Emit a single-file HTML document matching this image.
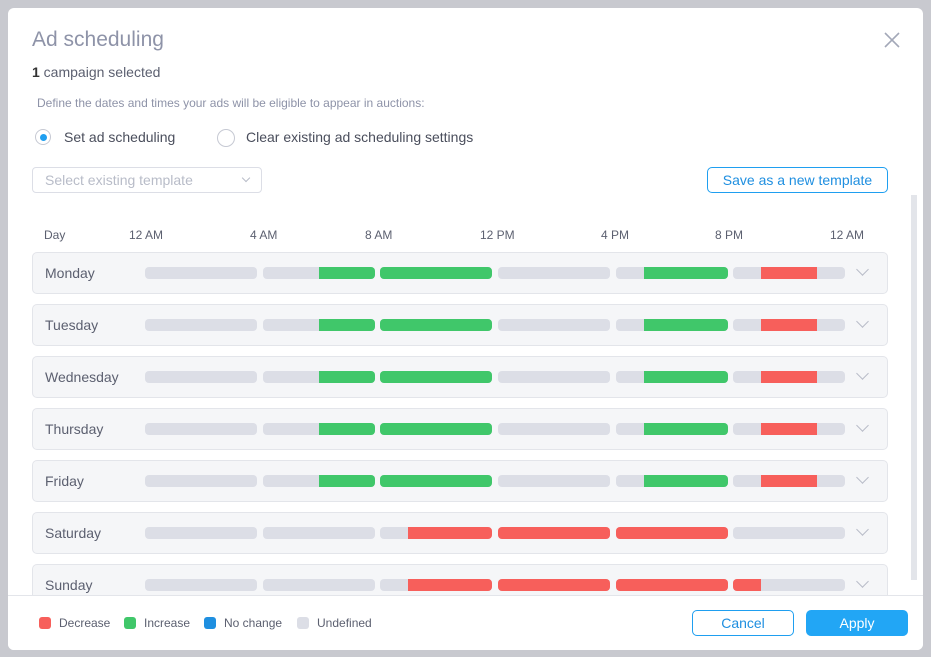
<!DOCTYPE html><html><head><style>
body{margin:0;width:931px;height:657px;background:#c8c9cf;font-family:"Liberation Sans",sans-serif;position:relative;overflow:hidden}
.m{position:absolute;left:8px;top:8px;width:915px;height:642px;background:#fff;border-radius:6px;overflow:hidden}
.a{position:absolute;white-space:nowrap}
.row{position:absolute;left:24px;width:854px;height:40px;background:#f5f6f8;border:1px solid #e3e5ea;border-radius:5px}
.row .n{position:absolute;left:12px;top:12px;font-size:14px;color:#5c6070}
.seg{position:absolute;top:14px;height:12px;width:112px;border-radius:4px;overflow:hidden;background:#dcdee6}
.seg i{position:absolute;top:0;height:12px}
.g{background:#40c76a}.r{background:#f75f5b}
.chev{position:absolute;left:825px;top:12px;width:8px;height:8px;border-right:1.5px solid #b8bcc8;border-bottom:1.5px solid #b8bcc8;transform:rotate(45deg)}
.hd{position:absolute;top:220px;font-size:12px;color:#5c6070}
.lg{position:absolute;top:608px;font-size:12px;color:#5c6070}
.lg b{display:inline-block;width:12px;height:12px;border-radius:3px;vertical-align:-2px;margin-right:8px}
</style></head><body>
<div class="m">
<div class="a" style="left:24px;top:20px;font-size:21px;color:#8e93a8">Ad scheduling</div>
<div class="a" style="left:876px;top:24px;width:16px;height:16px">
<svg width="16" height="16"><path d="M1 1L15 15M15 1L1 15" stroke="#a3a8b8" stroke-width="1.6"/></svg></div>
<div class="a" style="left:24px;top:56px;font-size:14px;color:#5c6070"><b style="color:#333">1</b> campaign selected</div>
<div class="a" style="left:29px;top:88px;font-size:12px;color:#8e93a8">Define the dates and times your ads will be eligible to appear in auctions:</div>
<div class="a" style="left:27px;top:121px;width:16px;height:16px;border:1px solid #c6c9d3;border-radius:50%;box-sizing:border-box"><div style="position:absolute;left:4px;top:4px;width:7px;height:7px;border-radius:50%;background:#1f9ff0"></div></div>
<div class="a" style="left:56px;top:121px;font-size:14px;color:#4a4e5c">Set ad scheduling</div>
<div class="a" style="left:209px;top:121px;width:18px;height:18px;border:1px solid #c6c9d3;border-radius:50%;box-sizing:border-box"></div>
<div class="a" style="left:238px;top:121px;font-size:14px;color:#4a4e5c">Clear existing ad scheduling settings</div>
<div class="a" style="left:24px;top:159px;height:24px;border:1px solid #dcdee6;border-radius:4px;font-size:14px;color:#b8bcc8;line-height:24px;padding-left:12px;width:216px">Select existing template<span style="position:absolute;right:12px;top:7px;width:5px;height:5px;border-right:1.5px solid #b8bcc8;border-bottom:1.5px solid #b8bcc8;transform:rotate(45deg)"></span></div>
<div class="a" style="left:699px;top:159px;width:179px;height:24px;border:1px solid #1f9ff0;border-radius:5px;font-size:14px;color:#1f8fe0;line-height:24px;text-align:center">Save as a new template</div>
<div class="hd" style="left:36px">Day</div>
<div class="hd" style="left:121px">12 AM</div>
<div class="hd" style="left:242px">4 AM</div>
<div class="hd" style="left:357px">8 AM</div>
<div class="hd" style="left:472px">12 PM</div>
<div class="hd" style="left:593px">4 PM</div>
<div class="hd" style="left:707px">8 PM</div>
<div class="hd" style="left:822px">12 AM</div>
<div id="rows"></div>
<div class="a" style="left:903px;top:187px;width:6px;height:385px;background:#e3e5ea"></div>
<div class="a" style="left:0;top:587px;width:915px;height:55px;background:#fff;border-top:1px solid #e3e5ea"></div>
<div class="lg" style="left:31px"><b class="r"></b>Decrease</div>
<div class="lg" style="left:116px"><b class="g"></b>Increase</div>
<div class="lg" style="left:196px"><b style="background:#1f8fe0"></b>No change</div>
<div class="lg" style="left:289px"><b style="background:#dcdee6"></b>Undefined</div>
<div class="a" style="left:684px;top:602px;width:100px;height:24px;border:1px solid #1f9ff0;border-radius:5px;font-size:14px;color:#1f8fe0;line-height:24px;text-align:center">Cancel</div>
<div class="a" style="left:798px;top:602px;width:102px;height:26px;background:#22a6f5;border-radius:5px;font-size:14px;color:#fff;line-height:26px;text-align:center">Apply</div>
</div>
<script>
var days=["Monday","Tuesday","Wednesday","Thursday","Friday","Saturday","Sunday"];
var offs=[112,230,347,465,583,700];
var wk=[[],[[56,112,'g']],[[0,112,'g']],[],[[28,112,'g']],[[28,84,'r']]];
var we=[[],[],[[28,112,'r']],[[0,112,'r']],[[0,112,'r']],[]];
var su=[[],[],[[28,112,'r']],[[0,112,'r']],[[0,112,'r']],[[0,28,'r']]];
var h='';
days.forEach(function(d,i){var p=i<5?wk:(i==5?we:su);
h+='<div class="row" style="top:'+(244+52*i)+'px"><div class="n">'+d+'</div>';
for(var s=0;s<6;s++){h+='<div class="seg" style="left:'+offs[s]+'px">';
p[s].forEach(function(q){h+='<i class="'+q[2]+'" style="left:'+q[0]+'px;width:'+(q[1]-q[0])+'px"></i>'});h+='</div>';}
h+='<div class="chev"></div></div>';});
document.getElementById('rows').innerHTML=h;
</script>
</body></html>
